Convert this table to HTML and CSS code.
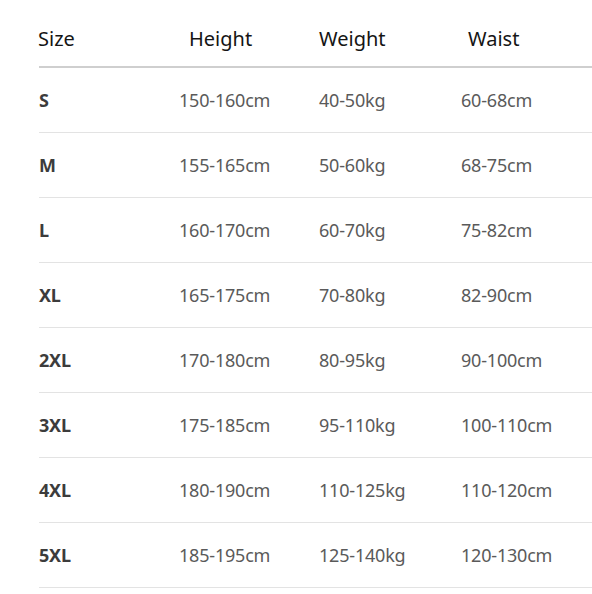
FILE: index.html
```html
<!DOCTYPE html>
<html>
<head>
<meta charset="utf-8">
<link rel="stylesheet" href="styles.css">
</head>
<body>
<div class="chart">
  <div class="row head">
    <div class="cell h-size">Size</div>
    <div class="cell h-height">Height</div>
    <div class="cell h-weight">Weight</div>
    <div class="cell h-waist">Waist</div>
  </div>
  <div class="row"><div class="cell size">S</div><div class="cell">150-160cm</div><div class="cell">40-50kg</div><div class="cell">60-68cm</div></div>
  <div class="row"><div class="cell size">M</div><div class="cell">155-165cm</div><div class="cell">50-60kg</div><div class="cell">68-75cm</div></div>
  <div class="row"><div class="cell size">L</div><div class="cell">160-170cm</div><div class="cell">60-70kg</div><div class="cell">75-82cm</div></div>
  <div class="row"><div class="cell size">XL</div><div class="cell">165-175cm</div><div class="cell">70-80kg</div><div class="cell">82-90cm</div></div>
  <div class="row"><div class="cell size">2XL</div><div class="cell">170-180cm</div><div class="cell">80-95kg</div><div class="cell">90-100cm</div></div>
  <div class="row"><div class="cell size">3XL</div><div class="cell">175-185cm</div><div class="cell">95-110kg</div><div class="cell">100-110cm</div></div>
  <div class="row"><div class="cell size">4XL</div><div class="cell">180-190cm</div><div class="cell">110-125kg</div><div class="cell">110-120cm</div></div>
  <div class="row"><div class="cell size">5XL</div><div class="cell">185-195cm</div><div class="cell">125-140kg</div><div class="cell">120-130cm</div></div>
</div>
</body>
</html>
```
FILE: styles.css
```css
html, body {
  margin: 0;
  padding: 0;
  background: #ffffff;
}
.chart {
  margin-left: 39px;
  font-family: "Noto Sans", "Open Sans", sans-serif;
}
.row {
  display: grid;
  grid-template-columns: 140px 140px 142px 1fr;
  height: 64px;
  align-items: center;
  border-bottom: 1px solid #e3e3e3;
  font-size: 18px;
  color: #5a5a5a;
  letter-spacing: -0.2px;
}
.row.head {
  height: 66px;
  align-items: start;
  border-bottom: 2px solid #cfcfcf;
  font-size: 20px;
  line-height: 28px;
  color: #151515;
  letter-spacing: 0;
}
.head .cell {
  padding-top: 25px;
}
.h-size { margin-left: -1px; }
.h-height { padding-left: 10px; }
.h-weight { padding-left: 0; }
.h-waist { padding-left: 7px; }
.size {
  font-weight: 700;
  color: #3c3c3c;
}
```
